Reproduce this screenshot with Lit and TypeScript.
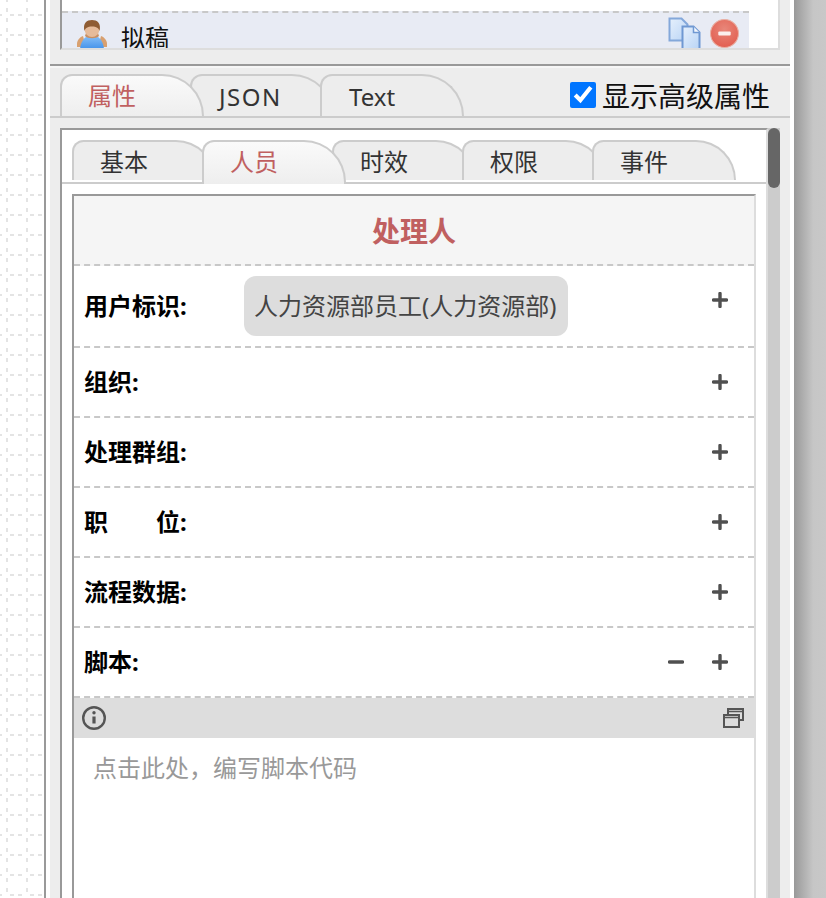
import { LitElement, html, css } from "lit";
import { customElement } from "lit/decorators.js";

const plus = html`<svg class="ico" viewBox="0 0 16 16"><path d="M8 1.500v13M1.500 8h13" stroke="#505050" stroke-width="3.400" stroke-linecap="round" fill="none"/></svg>`;
const minus = html`<svg class="ico" viewBox="0 0 16 16"><path d="M1.500 8h13" stroke="#505050" stroke-width="3.400" stroke-linecap="round" fill="none"/></svg>`;

const dots = html`<svg class="dots" width="44" height="898">
  <defs>
    <pattern id="dotgrid" width="20" height="20" patternUnits="userSpaceOnUse">
      <rect x="10" y="14" width="4" height="2" fill="#e4e4e4"/>
      <rect x="18" y="14" width="4" height="2" fill="#e4e4e4"/>
      <rect x="0" y="14" width="2" height="2" fill="#e4e4e4"/>
      <rect x="6" y="8" width="2" height="4" fill="#e4e4e4"/>
      <rect x="6" y="18" width="2" height="2" fill="#e4e4e4"/>
      <rect x="6" y="0" width="2" height="2" fill="#e4e4e4"/>
    </pattern>
  </defs>
  <rect width="44" height="898" fill="url(#dotgrid)"/>
</svg>`;

const person = html`<svg class="person" viewBox="0 0 30 32">
  <defs>
    <linearGradient id="pb" x1="0" y1="0" x2="0" y2="1"><stop offset="0" stop-color="#8cc2f8"/><stop offset="1" stop-color="#3f8fe9"/></linearGradient>
  </defs>
  <path d="M0 24c0-4 3-7 6-8l3 11H0z" fill="#d8a070"/>
  <path d="M30 24c0-4-3-7-6-8l-3 11h9z" fill="#d8a070"/>
  <path d="M3 30c0-8 5-15 12-15s12 7 12 15z" fill="url(#pb)"/>
  <path d="M9 13h12l1 3c-3 3-11 3-14 0z" fill="#c98f62"/>
  <ellipse cx="15" cy="9" rx="7.500" ry="8" fill="#e6bb9a"/>
  <path d="M7.500 11C5.500 3 10 0 15 0s9.500 3 7.500 11c-.8-3-3-4.500-7.500-4.500S8.300 8 7.500 11z" fill="#8f5c33"/>
</svg>`;

const copy = html`<svg class="copy" viewBox="0 0 33 32">
  <defs>
    <linearGradient id="cp" x1="0" y1="0" x2="1" y2="1"><stop offset="0" stop-color="#e6f0fc"/><stop offset="1" stop-color="#b9d4f5"/></linearGradient>
  </defs>
  <path d="M1.500 1.500h12l6 6v16h-18z" fill="url(#cp)" stroke="#84a8da" stroke-width="2"/>
  <path d="M14.500 9.500h11l6 6v17h-17z" fill="url(#cp)" stroke="#6f98d2" stroke-width="2"/>
  <path d="M25.500 9.500v6h6" fill="#f4f8fe" stroke="#6f98d2" stroke-width="1.500"/>
</svg>`;

const removeIcon = html`<svg class="remove" viewBox="0 0 28 28">
  <defs>
    <radialGradient id="rd" cx="50%" cy="35%" r="70%"><stop offset="0" stop-color="#e8877a"/><stop offset="1" stop-color="#e25c4e"/></radialGradient>
  </defs>
  <circle cx="14" cy="14" r="13.500" fill="url(#rd)" stroke="#e9b0a4" stroke-width="1"/>
  <rect x="8" y="12" width="12" height="4" rx="1" fill="#fbf0ee"/>
</svg>`;

const info = html`<svg class="info" viewBox="0 0 26 26">
  <circle cx="13" cy="13" r="10.800" fill="none" stroke="#555" stroke-width="2.400"/>
  <circle cx="13" cy="7.800" r="1.700" fill="#555"/>
  <path d="M13 11.500v7" stroke="#555" stroke-width="3.200" fill="none"/>
</svg>`;

const restore = html`<svg class="restore" viewBox="0 0 21 20">
  <path d="M5 6V1h15v11h-4" fill="none" stroke="#555" stroke-width="2"/>
  <path d="M1 7h15v12H1z" fill="none" stroke="#555" stroke-width="2"/>
  <path d="M5 3.500h15M1 9.500h15" stroke="#555" stroke-width="1.500"/>
</svg>`;

@customElement("app-root")
export class AppRoot extends LitElement {
  static styles = css`
    :host {
      display: block;
      width: 826px;
      height: 898px;
      overflow: hidden;
      font-family: "Noto Sans", "Noto Sans CJK SC", sans-serif;
      font-size: 24px;
      color: #333;
    }
    * { box-sizing: border-box; }
    .page { display: flex; width: 826px; height: 898px; }
    .gridbg { width: 44px; flex: none; background: #fff; }
    .dots { display: block; }
    .vline { width: 2px; flex: none; background: #999; }
    .gap { width: 4px; flex: none; background: #fff; }
    .panel {
      width: 740px;
      flex: none;
      background: #ededed;
      display: flex;
      flex-direction: column;
      height: 898px;
      overflow: hidden;
    }
    .gap2 { width: 4px; flex: none; background: #fff; }
    .shadow { flex: 1; background: linear-gradient(90deg, #999, #c6c6c6 60%, #c8c8c8); }

    .top {
      margin-left: 10px;
      width: 720px;
      height: 50px;
      flex: none;
      background: #fff;
      border-left: 2px solid #999;
      border-right: 2px solid #ddd;
      border-bottom: 2px solid #ddd;
      padding: 11px 29px 0 0;
      overflow: hidden;
    }
    .node {
      height: 48px;
      background: #e8ebf4;
      border-top: 2px dashed #c8c8c8;
      display: flex;
      align-items: flex-start;
      padding: 7px 10px 0 15px;
      color: #222;
    }
    .person { width: 30px; height: 32px; flex: none; }
    .node .name { margin-left: 15px; line-height: 36px; height: 36px; color: #111; margin-left: 14px; }
    .node .tools { margin-left: auto; display: flex; gap: 9px; align-items: flex-start; }
    .copy { width: 33px; height: 32px; display: block; margin-top: -3px; }
    .remove { width: 29px; height: 29px; display: block; margin-top: -1px; }

    .rule { height: 2px; flex: none; background: #999; margin-top: 14px; }
    .rule2 { height: 2px; flex: none; background: #f6f6f6; }

    .outerhead {
      height: 50px;
      flex: none;
      display: flex;
      align-items: flex-end;
      padding: 6px 20px 0 10px;
      border-bottom: 2px solid #ccc;
    }
    .tabs { display: flex; align-items: flex-end; }
    .tab {
      width: 144px;
      height: 42px;
      margin-right: -14px;
      border: 2px solid #ccc;
      border-bottom: none;
      border-radius: 12px 42px 0 0;
      background: #ededed;
      padding-left: 26px;
      line-height: 40px;
      color: #333;
      position: relative;
      z-index: 1;
      flex: none;
    }
    .tab.active {
      z-index: 2;
      color: #c06060;
      background: linear-gradient(#fafafa, #eeeeee);
    }
    .tab.lat { line-height: 42px; padding-left: 27px; }
    .wide { letter-spacing: 1.500px; }
    .check {
      margin-left: auto;
      display: flex;
      align-items: center;
      font-size: 28px;
      color: #111;
      height: 44px;
      margin-bottom: -1px;
    }
    .check input {
      width: 26px;
      height: 26px;
      margin: 0 6px 0 0;
    }

    .body {
      margin: 10px 0 0 10px;
      display: flex;
      width: 720px;
      flex: 1;
      min-height: 0;
    }
    .content {
      width: 708px;
      flex: none;
      background: #fff;
      border-top: 2px solid #999;
      border-left: 2px solid #999;
      border-right: 2px solid #ddd;
      padding-top: 10px;
      display: flex;
      flex-direction: column;
    }
    .scroll { flex: 1; background: #ccc; }
    .thumb {
      width: 12px;
      height: 60px;
      background: #666;
      border-radius: 6px;
    }
    .innerhead {
      height: 44px;
      flex: none;
      border-bottom: 2px solid #ccc;
      padding-left: 10px;
      display: flex;
      align-items: flex-start;
    }
    .inner .tab {
      height: 40px;
      line-height: 40px;
    }
    .inner .tab.active { height: 44px; }
    .inner .tabs { align-items: flex-start; }

    .table {
      margin: 10px 0 0 10px;
      width: 684px;
      flex: 1;
      border-top: 2px solid #999;
      border-left: 2px solid #999;
      border-right: 2px solid #ddd;
      display: flex;
      flex-direction: column;
    }
    .title {
      height: 70px;
      background: #f5f5f5;
      text-align: center;
      line-height: 70px;
      font-weight: 700;
      font-size: 28px;
      color: #c06060;
      border-bottom: 2px dashed #c8c8c8;
      flex: none;
    }
    .row {
      height: 70px;
      flex: none;
      border-bottom: 2px dashed #c8c8c8;
      display: flex;
      align-items: center;
      padding: 0 26px 0 10px;
    }
    .row.first { height: 82px; }
    .label {
      font-weight: 700;
      color: #000;
      width: 160px;
      flex: none;
      line-height: 32px;
      white-space: pre;
    }
    .chip {
      height: 60px;
      line-height: 60px;
      border-radius: 12px;
      background: #ddd;
      padding: 0 12px 0 10px;
      color: #444;
      white-space: nowrap;
    }
    .acts { margin-left: auto; display: flex; gap: 28px; align-items: center; }
    .first .acts { margin-top: -12px; }
    .ico { width: 16px; height: 16px; display: block; }
    .bar {
      height: 40px;
      flex: none;
      background: #ddd;
      display: flex;
      align-items: center;
      justify-content: space-between;
      padding: 0 10px 0 7px;
    }
    .info { width: 26px; height: 26px; display: block; }
    .restore { width: 21px; height: 20px; display: block; }
    .editor {
      flex: 1;
      padding: 12px 19px;
      line-height: 36px;
      color: #999;
    }
  `;

  render() {
    return html`
      <div class="page">
        <div class="gridbg">${dots}</div>
        <div class="vline"></div>
        <div class="gap"></div>
        <div class="panel">
          <div class="top">
            <div class="node">
              ${person}
              <span class="name">拟稿</span>
              <span class="tools">${copy}${removeIcon}</span>
            </div>
          </div>
          <div class="rule"></div>
          <div class="rule2"></div>
          <div class="outerhead">
            <div class="tabs">
              <div class="tab active">属性</div>
              <div class="tab lat"><span class="wide">JSON</span></div>
              <div class="tab lat">Text</div>
            </div>
            <label class="check"><input type="checkbox" checked />显示高级属性</label>
          </div>
          <div class="body">
            <div class="content">
              <div class="innerhead inner">
                <div class="tabs">
                  <div class="tab">基本</div>
                  <div class="tab active">人员</div>
                  <div class="tab">时效</div>
                  <div class="tab">权限</div>
                  <div class="tab">事件</div>
                </div>
              </div>
              <div class="table">
                <div class="title">处理人</div>
                <div class="row first">
                  <div class="label">用户标识:</div>
                  <div class="chip">人力资源部员工(人力资源部)</div>
                  <div class="acts">${plus}</div>
                </div>
                <div class="row"><div class="label">组织:</div><div class="acts">${plus}</div></div>
                <div class="row"><div class="label">处理群组:</div><div class="acts">${plus}</div></div>
                <div class="row"><div class="label">职${"　　"}位:</div><div class="acts">${plus}</div></div>
                <div class="row"><div class="label">流程数据:</div><div class="acts">${plus}</div></div>
                <div class="row"><div class="label">脚本:</div><div class="acts">${minus}${plus}</div></div>
                <div class="bar">${info}${restore}</div>
                <div class="editor">点击此处，编写脚本代码</div>
              </div>
            </div>
            <div class="scroll"><div class="thumb"></div></div>
          </div>
        </div>
        <div class="gap2"></div>
        <div class="shadow"></div>
      </div>
    `;
  }
}
